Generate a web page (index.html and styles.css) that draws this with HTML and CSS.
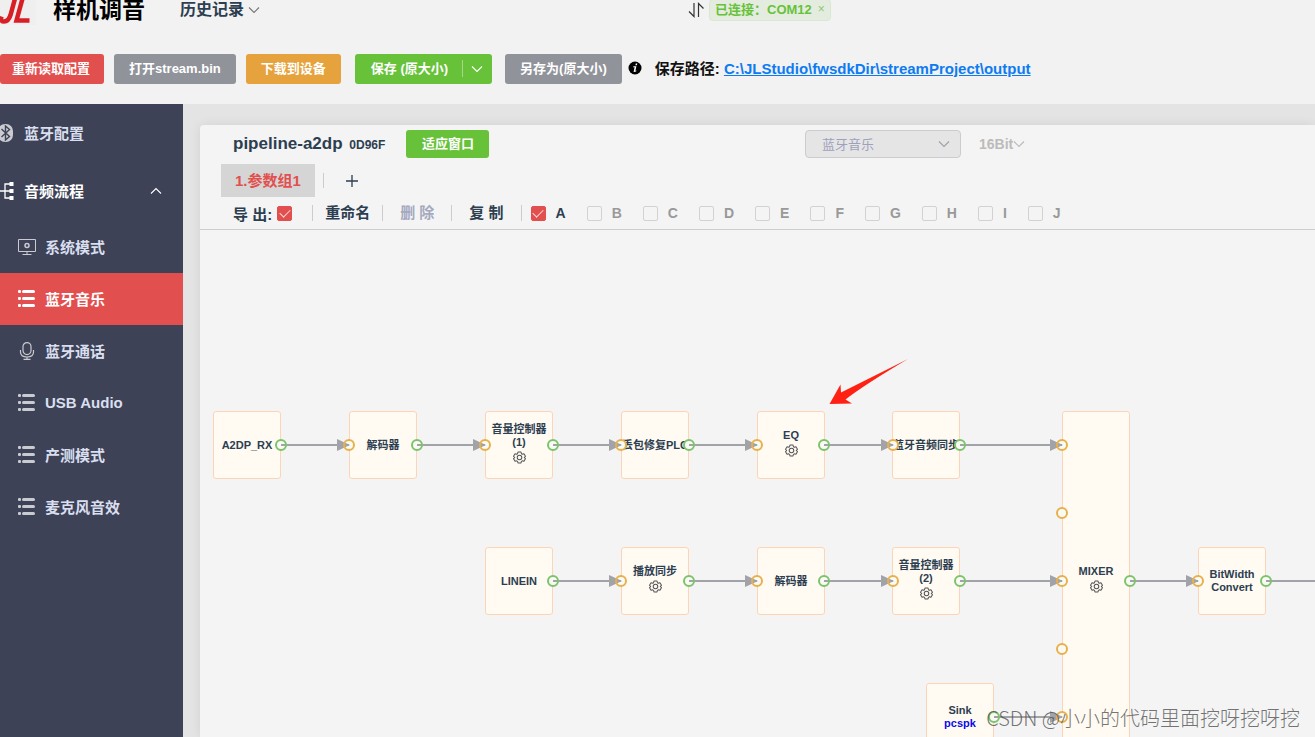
FILE: index.html
```html
<!DOCTYPE html>
<html lang="zh-CN">
<head>
<meta charset="utf-8">
<title>样机调音</title>
<link rel="stylesheet" href="styles.css">
</head>
<body>
<svg class="defs" aria-hidden="true">
  <symbol id="gear" viewBox="0 0 24 24"><path fill="none" stroke="currentColor" stroke-width="1.9" stroke-linejoin="round" d="M9.2 2h5.6l.8 3 1.6.9 3-.8 2.8 4.700-2.200 2.200 2.200 2.200-2.800 4.900-3-.9-1.600.9-.8 3H9.200l-.8-3-1.600-.9-3 .9L1 14.200 3.200 12 1 9.800l2.800-4.700 3 .8 1.600-.9zM12 7.800a4.200 4.200 0 1 0 0 8.400a4.200 4.200 0 1 0 0-8.400z"/></symbol>
  <symbol id="list" viewBox="0 0 18 18"><g fill="currentColor"><rect x="0" y="0" width="3" height="3" rx="1"/><rect x="4" y="0" width="13" height="3" rx="1.500"/><rect x="0" y="7" width="3" height="3" rx="1"/><rect x="4" y="7" width="13" height="3" rx="1.500"/><rect x="0" y="14" width="3" height="3" rx="1"/><rect x="4" y="14" width="13" height="3" rx="1.500"/></g></symbol>
  <symbol id="down" viewBox="0 0 12 12"><path fill="none" stroke="currentColor" stroke-width="1.100" d="M1 3.500l5 5 5-5"/></symbol>
</svg>

<header class="header">
  <div class="nav">
    <svg class="logo" viewBox="0 0 36 30" aria-hidden="true">
      <rect width="36" height="30" fill="#efefef"/>
      <path fill="none" stroke="#d91f26" stroke-width="4.500" d="M16 0L10.500 20Q8.500 26.500 4 26.500Q0 26.500 1.500 21.500"/>
      <path fill="none" stroke="#d91f26" stroke-width="4.500" d="M23.500 0L16.500 25.500H29.500"/>
    </svg>
    <h1 class="title">样机调音</h1>
    <button class="history" type="button">历史记录 <svg class="chev"><use href="#down"/></svg></button>
    <div class="connection">
      <svg class="swap" viewBox="0 0 16 16" aria-hidden="true"><path fill="none" stroke="#333" stroke-width="1.200" d="M6 1v13.500L1 9.500M10.500 15V1.500l5 5"/></svg>
      <span class="tag">已连接：COM12 <button class="tag-close" type="button" aria-label="关闭">×</button></span>
    </div>
  </div>
  <div class="toolbar">
    <button class="btn red reload" type="button">重新读取配置</button>
    <button class="btn gray open" type="button">打开stream.bin</button>
    <button class="btn orange" type="button">下载到设备</button>
    <div class="split">
      <button class="btn green save" type="button">保存 (原大小)</button>
      <button class="btn green more" type="button" aria-label="更多"><svg class="chev"><use href="#down"/></svg></button>
    </div>
    <button class="btn gray save-as" type="button">另存为(原大小)</button>
    <svg class="info" viewBox="0 0 14 14" aria-hidden="true"><circle cx="7" cy="7" r="6.500"/><path d="M7.800 2.500h1.500l-.4 1.800H7.400zM5.400 5.300h3L7.400 9.800l1.100-.4-.2.900q-1 .9-2.700.8L6.600 6.300H5.200z" fill="#fff"/></svg>
    <p class="path">保存路径: <a href="#">C:\JLStudio\fwsdkDir\streamProject\output</a></p>
  </div>
</header>

<div class="body">
  <nav class="sidebar">
    <a class="item" href="#"><svg class="top-icon" viewBox="0 0 14 20"><rect x="-2" y="1" width="15" height="18" rx="7" fill="#c9cbd0"/><path d="M1.500 6l8 7.500-4 3.500V3l4 3.500-8 7.500" fill="none" stroke="#3e4257" stroke-width="1.400"/></svg><span>蓝牙配置</span></a>
    <a class="item open-group" href="#"><svg class="top-icon" viewBox="0 0 14 20"><path d="M0 10h10M10 3H5v14h5" fill="none" stroke="#fff" stroke-width="1.300"/><path fill="#fff" d="M9.500 1h4v4h-4zM9.500 8h4v4h-4zM9.500 15h4v4h-4z"/></svg><span>音频流程</span><svg class="chev up"><use href="#down"/></svg></a>
    <div class="submenu">
      <a class="item sub" href="#"><svg class="icon" viewBox="0 0 18 18"><g fill="none" stroke="currentColor"><path d="M.5 1.500h17v12H.5zM9 13.500v2.500M4.500 16.500h9"/><circle cx="9" cy="7.500" r="2" stroke-width="1.500"/></g></svg><span>系统模式</span></a>
      <a class="item sub active" href="#"><svg class="icon"><use href="#list"/></svg><span>蓝牙音乐</span></a>
      <a class="item sub" href="#"><svg class="icon" viewBox="0 0 18 18"><g fill="none" stroke="currentColor" stroke-width="1.200"><rect x="5" y=".6" width="8" height="12" rx="4"/><path d="M2.500 8v2q0 5 6.500 5t6.500-5V8M9 15v2.400M5.500 17.400h7"/></g></svg><span>蓝牙通话</span></a>
      <a class="item sub" href="#"><svg class="icon"><use href="#list"/></svg><span>USB Audio</span></a>
      <a class="item sub" href="#"><svg class="icon"><use href="#list"/></svg><span>产测模式</span></a>
      <a class="item sub" href="#"><svg class="icon"><use href="#list"/></svg><span>麦克风音效</span></a>
    </div>
  </nav>

  <main class="main">
    <section class="panel">
      <div class="head">
        <h2 class="pipeline">pipeline-a2dp <small>0D96F</small></h2>
        <button class="btn green fit" type="button">适应窗口</button>
        <div class="select-wrap">
          <select class="select" aria-label="场景" disabled><option>蓝牙音乐</option></select>
          <svg class="chev"><use href="#down"/></svg>
        </div>
        <button class="bits" type="button" disabled>16Bit<svg class="chev"><use href="#down"/></svg></button>
      </div>
      <div class="tabs">
        <button class="tab" type="button">1.参数组1</button>
        <span class="divider"></span>
        <button class="add" type="button" aria-label="添加"><svg viewBox="0 0 14 14"><path d="M7 1v12M1 7h12" stroke="#2c3e50" stroke-width="1.300"/></svg></button>
      </div>
      <div class="options">
        <label class="export">导 出: <input class="check large" type="checkbox" checked></label>
        <button class="action" type="button">重命名</button>
        <button class="action wide" type="button" disabled>删 除</button>
        <button class="action wide" type="button">复 制</button>
        <div class="groups">
          <label class="on"><input class="check" type="checkbox" checked>A</label>
          <label><input class="check" type="checkbox">B</label>
          <label><input class="check" type="checkbox">C</label>
          <label><input class="check" type="checkbox">D</label>
          <label><input class="check" type="checkbox">E</label>
          <label><input class="check" type="checkbox">F</label>
          <label><input class="check" type="checkbox">G</label>
          <label><input class="check" type="checkbox">H</label>
          <label><input class="check" type="checkbox">I</label>
          <label><input class="check" type="checkbox">J</label>
        </div>
      </div>
      <div class="canvas">
        <div class="node c1 r1">A2DP_RX</div>
        <div class="node c2 r1">解码器</div>
        <div class="node c3 r1">音量控制器<br>(1)<svg class="gear"><use href="#gear"/></svg></div>
        <div class="node c4 r1">丢包修复PLC</div>
        <div class="node c5 r1">EQ<svg class="gear"><use href="#gear"/></svg></div>
        <div class="node c6 r1">蓝牙音频同步</div>
        <div class="node c3 r2">LINEIN</div>
        <div class="node c4 r2">播放同步<svg class="gear"><use href="#gear"/></svg></div>
        <div class="node c5 r2">解码器</div>
        <div class="node c6 r2">音量控制器<br>(2)<svg class="gear"><use href="#gear"/></svg></div>
        <div class="node mixer r1">MIXER<svg class="gear"><use href="#gear"/></svg></div>
        <div class="node convert r2">BitWidth<br>Convert</div>
        <div class="node sink r3">Sink<span class="device">pcspk</span></div>
        <svg class="edges" aria-hidden="true">
          <defs>
            <marker id="arrow" markerUnits="userSpaceOnUse" markerWidth="13" markerHeight="12" refX="12" refY="6"><path d="M0 0L13 6L0 12z" fill="#a2a3a8"/></marker>
          </defs>
          <g fill="#fafaf5">
            <circle cx="81" cy="215" r="5"/><circle cx="149" cy="215" r="5"/><circle cx="217" cy="215" r="5"/><circle cx="285" cy="215" r="5"/><circle cx="353" cy="215" r="5"/><circle cx="421" cy="215" r="5"/><circle cx="489" cy="215" r="5"/><circle cx="557" cy="215" r="5"/><circle cx="624" cy="215" r="5"/><circle cx="693" cy="215" r="5"/><circle cx="760" cy="215" r="5"/><circle cx="862" cy="215" r="5"/><circle cx="862" cy="283" r="5"/><circle cx="862" cy="419" r="5"/>
            <circle cx="353" cy="351" r="5"/><circle cx="421" cy="351" r="5"/><circle cx="489" cy="351" r="5"/><circle cx="557" cy="351" r="5"/><circle cx="624" cy="351" r="5"/><circle cx="693" cy="351" r="5"/><circle cx="760" cy="351" r="5"/><circle cx="862" cy="351" r="5"/><circle cx="930" cy="351" r="5"/><circle cx="998" cy="351" r="5"/><circle cx="1066" cy="351" r="5"/><circle cx="794" cy="487" r="5"/><circle cx="862" cy="487" r="5"/>
          </g>
          <g class="lines">
            <path d="M81 215H149"/><path d="M217 215H285"/><path d="M353 215H421"/><path d="M489 215H557"/><path d="M624 215H693"/><path d="M760 215H862"/>
            <path d="M353 351H421"/><path d="M489 351H557"/><path d="M624 351H693"/><path d="M760 351H862"/><path d="M930 351H998"/><path d="M1066 351H1400"/><path d="M794 487H862"/>
          </g>
          <g class="out">
            <circle cx="81" cy="215" r="5"/><circle cx="217" cy="215" r="5"/><circle cx="353" cy="215" r="5"/><circle cx="489" cy="215" r="5"/><circle cx="624" cy="215" r="5"/><circle cx="760" cy="215" r="5"/>
            <circle cx="353" cy="351" r="5"/><circle cx="489" cy="351" r="5"/><circle cx="624" cy="351" r="5"/><circle cx="760" cy="351" r="5"/><circle cx="930" cy="351" r="5"/><circle cx="1066" cy="351" r="5"/><circle cx="794" cy="487" r="5"/>
          </g>
          <g class="in">
            <circle cx="149" cy="215" r="5"/><circle cx="285" cy="215" r="5"/><circle cx="421" cy="215" r="5"/><circle cx="557" cy="215" r="5"/><circle cx="693" cy="215" r="5"/><circle cx="862" cy="215" r="5"/><circle cx="862" cy="283" r="5"/><circle cx="862" cy="419" r="5"/>
            <circle cx="421" cy="351" r="5"/><circle cx="557" cy="351" r="5"/><circle cx="693" cy="351" r="5"/><circle cx="862" cy="351" r="5"/><circle cx="998" cy="351" r="5"/><circle cx="862" cy="487" r="5"/>
          </g>
          <path fill="#ff2113" d="M708 129L641 162.500L640.500 154.500L629.500 174L652 173.500L645.500 169.500Q664 155 708 129z"/>
        </svg>
      </div>
    </section>
  </main>
</div>
<div class="watermark">CSDN @小小的代码里面挖呀挖呀挖</div>
</body>
</html>
```

FILE: styles.css
```css
* { box-sizing: border-box; }

body {
  margin: 0;
  height: 100vh;
  display: flex;
  flex-direction: column;
  overflow: hidden;
  background: #e4e4e4;
  color: #2c3e50;
  font-family: "Liberation Sans", "Noto Sans CJK SC", sans-serif;
  font-weight: bold;
}

button {
  margin: 0;
  padding: 0;
  border: 0;
  background: none;
  color: inherit;
  font: inherit;
}

.defs { display: none; }
.chev { width: 12px; height: 12px; flex: none; }

/* Header */
.header {
  flex: none;
  padding-bottom: 20px;
  background: #f2f2f2;
}
.nav {
  display: flex;
  align-items: center;
  height: 20px;
  margin-bottom: 34px;
}
.logo { width: 36px; height: 30px; margin-right: 17px; }
.title {
  margin: 0;
  color: #000;
  font-size: 23px;
  line-height: 20px;
}
.history {
  display: flex;
  align-items: center;
  gap: 4px;
  margin-left: 35px;
  font-size: 16px;
  line-height: 20px;
}
.history .chev { color: #777; }
.connection {
  display: flex;
  align-items: center;
  gap: 5px;
  margin-left: 428px;
}
.swap { width: 16px; height: 16px; }
.tag {
  display: flex;
  align-items: center;
  gap: 6px;
  height: 22px;
  padding: 0 5px 3px;
  border: 1px solid #d9e8d1;
  border-radius: 4px;
  background: #e4ecdf;
  color: #67c23a;
  font-size: 13px;
  white-space: nowrap;
}
.tag-close { font-size: 12px; font-weight: normal; color: #8cc870; }

.toolbar { display: flex; align-items: center; }
.btn {
  height: 30px;
  padding: 0 15px 3px;
  border-radius: 3px;
  color: #fff;
  font-size: 13px;
  white-space: nowrap;
  margin-right: 10px;
}
.red { background: #e1504f; }
.gray { background: #909399; }
.orange { background: #e6a23c; }
.green { background: #67c23a; }
.reload { padding: 0 14px 3px 12px; }
.split { display: flex; margin: 0 13px 0 4px; }
.save { margin: 0; border-radius: 3px 0 0 3px; padding: 0 14px 3px 16px; }
.more {
  display: flex;
  align-items: center;
  margin: 0;
  padding: 0 9px;
  border-radius: 0 3px 3px 0;
  background: linear-gradient(#a3da89, #a3da89) 0 6px / 1px 17px no-repeat #67c23a;
}
.save-as { margin-right: 6px; }
.info { width: 14px; height: 14px; margin: 0 13px 2px 0; }
.path {
  margin: 0;
  padding-bottom: 4px;
  color: #111;
  font-size: 15px;
  white-space: nowrap;
}
.path a { color: #0d7bf2; }

/* Body */
.body { display: flex; flex: 1; min-height: 0; }
.sidebar {
  flex: none;
  width: 183px;
  background: #3e4257;
}
.item {
  display: flex;
  align-items: center;
  height: 58px;
  color: #d9dfee;
  font-size: 15px;
  text-decoration: none;
}
.item span { padding-bottom: 2px; }
.open-group { color: #fff; }
.top-icon { width: 14px; height: 20px; margin-right: 10px; }
.up { margin: 0 21px 0 auto; transform: rotate(180deg); }
.submenu { padding-top: 1px; }
.sub { height: 52px; padding-left: 18px; }
.icon { width: 18px; height: 18px; margin-right: 9px; color: #c9cbd0; }
.active, .active .icon { color: #fff; }
.active { background: #e1504f; }

.main { flex: 1; min-width: 0; padding: 21px 0 0 17px; }
.panel {
  display: flex;
  flex-direction: column;
  height: 100%;
  border-top-left-radius: 4px;
  background: #f4f4f4;
  box-shadow: 0 0 12px rgba(0, 0, 0, .08);
}
.head {
  display: flex;
  align-items: center;
  padding: 5px 0 6px 33px;
}
.pipeline {
  margin: 0;
  width: 173px;
  font-size: 17px;
  white-space: nowrap;
}
.pipeline small { margin-left: 2px; font-size: 12px; }
.fit { height: 28px; margin: 0 316px 0 0; padding: 0 15px 3px 16px; }
.select-wrap { display: grid; align-items: center; width: 156px; }
.select {
  grid-area: 1 / 1;
  appearance: none;
  height: 28px;
  padding: 0 16px;
  border: 1px solid #cccccf;
  border-radius: 4px;
  background: #e5e5e5;
  color: #9da1bd;
  font: inherit;
  font-weight: normal;
  font-size: 13px;
  opacity: 1;
}
.select-wrap .chev { grid-area: 1 / 1; justify-self: end; margin-right: 11px; color: #9da1b0; }
.bits {
  display: flex;
  align-items: center;
  margin-left: 18px;
  color: #bbb;
  font-size: 14px;
}
.tabs { display: flex; align-items: center; padding-left: 21px; }
.tab {
  height: 33px;
  padding: 0 14px 2px;
  background: #d5d5d5;
  color: #e1504f;
  font-size: 15px;
}
.divider { width: 1px; height: 15px; margin: 0 21px 0 8px; background: #ccc; }
.add { height: 14px; }
.add svg { display: block; width: 14px; height: 14px; }

.options {
  display: flex;
  align-items: center;
  height: 33px;
  padding-left: 33px;
  border-bottom: 1px solid #cdcdcd;
  font-size: 15px;
  white-space: nowrap;
}
.export { display: flex; align-items: center; gap: 5px; padding-right: 20px; }
.action { padding: 0 12px; border-left: 1px solid #ccc; line-height: 16px; }
.wide { padding: 0 17px; }
.action:disabled { color: #a5a9c0; }
.groups {
  display: flex;
  gap: 21px;
  padding-left: 9px;
  border-left: 1px solid #ccc;
  color: #999;
  font-size: 14px;
  line-height: 16px;
}
.groups label { display: flex; align-items: center; gap: 11px; }
.groups .on { color: #2c3e50; }
.check {
  appearance: none;
  display: grid;
  place-items: center;
  width: 15px;
  height: 15px;
  margin: 0;
  border: 1px solid #d2d2d2;
  border-radius: 2px;
}
.groups .check { margin-right: -1px; }
.check:checked { border-color: #e1504f; background: #e1504f; }
.check:checked::after {
  content: "";
  width: 9px;
  height: 5px;
  margin-bottom: 3px;
  border: solid #fbd5d5;
  border-width: 0 0 1px 1px;
  transform: rotate(-45deg);
}

/* Diagram */
.canvas { position: relative; flex: 1; min-height: 0; overflow: hidden; }
.edges { position: absolute; inset: 0; width: 100%; height: 100%; }
.lines { fill: none; stroke: #a2a3a8; stroke-width: 2; }
.lines path { marker-end: url(#arrow); }
.out, .in { fill: none; stroke-width: 2; }
.out { stroke: #7dc36c; }
.in { stroke: #e8b04b; }
.node {
  position: absolute;
  display: flex;
  flex-direction: column;
  align-items: center;
  justify-content: center;
  width: 68px;
  height: 68px;
  border: 1px solid #fcd5b8;
  border-radius: 3px;
  background: #fffaf2;
  font-size: 11px;
  line-height: 13px;
  text-align: center;
  white-space: nowrap;
}
.gear { width: 13px; height: 13px; margin: 2px 0 4px; color: #555; flex: none; }
.device { color: #0a0aee; }
.c1 { left: 13px; }
.c2 { left: 149px; }
.c3 { left: 285px; }
.c4 { left: 421px; }
.c5 { left: 557px; }
.c6 { left: 692px; }
.r1 { top: 181px; }
.r2 { top: 317px; }
.r3 { top: 453px; }
.mixer { left: 862px; height: 340px; }
.convert { left: 998px; }
.sink { left: 726px; }

.watermark {
  position: absolute;
  right: 15px;
  bottom: 4px;
  color: rgba(80, 80, 80, .8);
  font-family: "Noto Sans CJK SC", sans-serif;
  font-size: 20px;
  font-weight: 300;
  line-height: 30px;
}
```
